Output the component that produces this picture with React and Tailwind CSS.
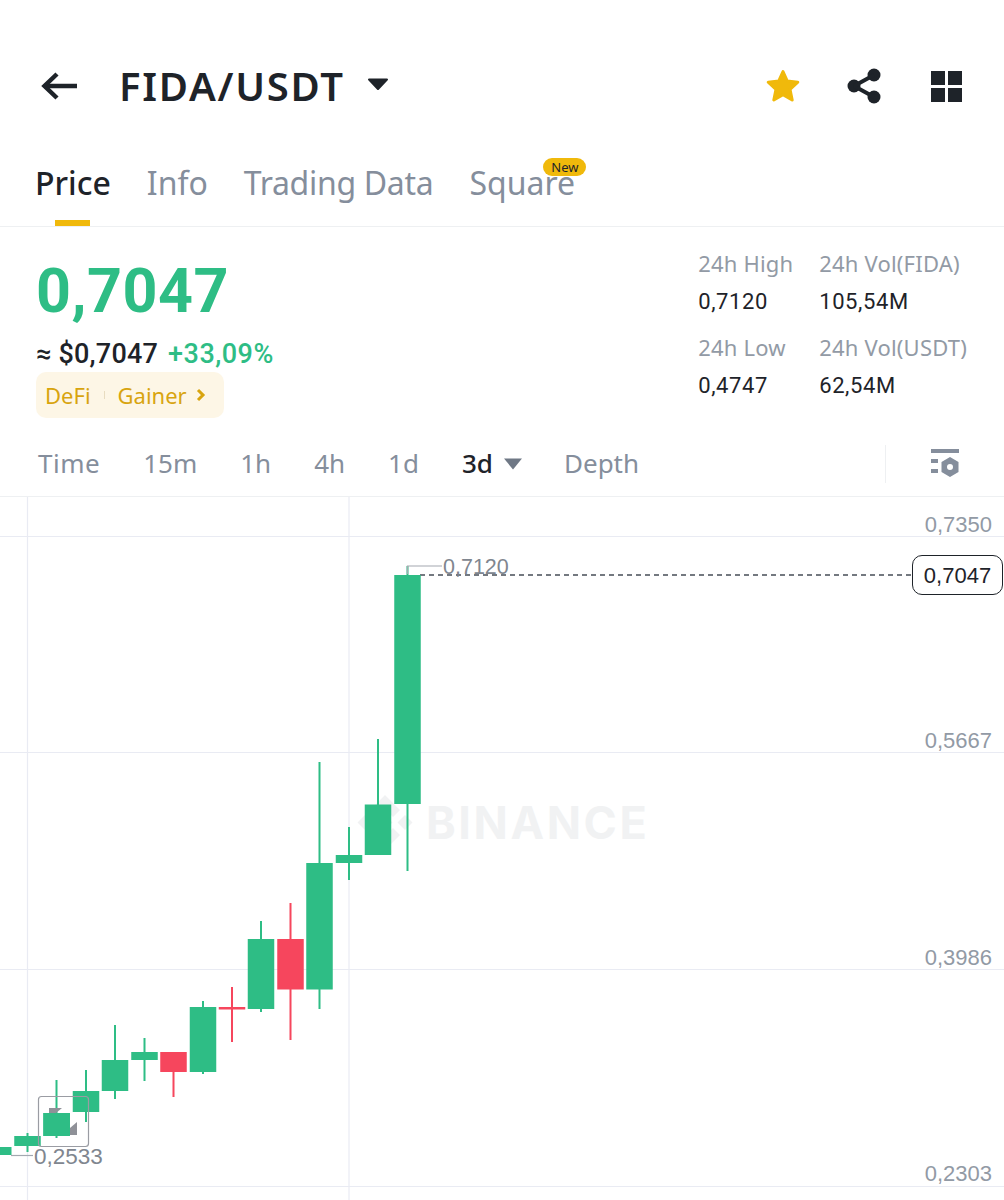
const candles = [
  { x: 5, top: 1147, bottom: 1155, low: 1155, high: 1147, w: 13 },
  { x: 27.5, top: 1136, bottom: 1146, high: 1133, low: 1152 },
  { x: 56.5, top: 1113, bottom: 1136, high: 1080, low: 1138 },
  { x: 86, top: 1091, bottom: 1112, high: 1070, low: 1122 },
  { x: 115, top: 1060, bottom: 1091, high: 1025, low: 1099 },
  { x: 144.5, top: 1052, bottom: 1060, high: 1038, low: 1081 },
  { x: 173.5, top: 1052, bottom: 1072, high: 1052, low: 1097, red: true },
  { x: 203, top: 1007, bottom: 1072, high: 1001, low: 1074 },
  { x: 232, top: 1007, bottom: 1009.5, high: 987, low: 1042, red: true },
  { x: 261, top: 939, bottom: 1009, high: 921, low: 1012 },
  { x: 290.5, top: 939, bottom: 989.5, high: 903, low: 1040, red: true },
  { x: 319.5, top: 863, bottom: 989.5, high: 762, low: 1009 },
  { x: 349, top: 855, bottom: 863, high: 827, low: 880 },
  { x: 378, top: 804.5, bottom: 855, high: 739, low: 855 },
  { x: 407.5, top: 575, bottom: 804, high: 566, low: 871 },
];

const axisLabels = [
  { text: "0,7350", y: 4 },
  { text: "0,5667", y: 220 },
  { text: "0,3986", y: 437 },
  { text: "0,2303", y: 653 },
];

const stats = [
  { label: "24h High", value: "0,7120" },
  { label: "24h Vol(FIDA)", value: "105,54M" },
  { label: "24h Low", value: "0,4747" },
  { label: "24h Vol(USDT)", value: "62,54M" },
];

const times = ["15m", "1h", "4h", "1d"];

function Chart() {
  return (
    <div className="relative h-[703px] w-full overflow-hidden">
      <svg className="absolute inset-0 h-full w-full" viewBox="0 497 1004 703">
        {/* grid */}
        {[536, 752, 969, 1186].map((y) => (
          <line key={y} x1="0" x2="1004" y1={y + 0.5} y2={y + 0.5} stroke="#e9ebf3" strokeWidth="1.2" />
        ))}
        {[27.5, 349].map((x) => (
          <line key={x} x1={x} x2={x} y1="497" y2="1200" stroke="#e9ebf3" strokeWidth="1.2" />
        ))}

        {/* watermark logo */}
        <g fill="#f1f2f3">
          <path d="M385 795 L400 810 L393 817 L385 809 L377 817 L370 810 Z" />
          <path d="M385 850 L400 835 L393 828 L385 836 L377 828 L370 835 Z" />
          <path d="M385 815 L392.500 822.500 L385 830 L377.500 822.500 Z" />
          <path d="M365 815 L372.500 822.500 L365 830 L357.500 822.500 Z" />
          <path d="M405 815 L412.500 822.500 L405 830 L397.500 822.500 Z" />
        </g>

        {/* last price line */}
        <line x1="420" x2="912" y1="575" y2="575" stroke="#474d57" strokeWidth="1.4" strokeDasharray="5 4" />

        {/* candles */}
        {candles.map((c) => {
          const color = c.red ? "#f6465d" : "#2ebd85";
          const w = c.w || 26.5;
          return (
            <g key={c.x} fill={color}>
              <rect x={c.x - 1} y={c.high} width="2" height={c.low - c.high} />
              <rect x={c.x - w / 2} y={c.top} width={w} height={c.bottom - c.top} />
            </g>
          );
        })}

        {/* high/low leader lines */}
        <path d="M407.5 574V566H442" fill="none" stroke="#a3a8b0" strokeWidth="1.2" />
        <path d="M11 1155.5H33" fill="none" stroke="#a3a8b0" strokeWidth="1.2" />

        {/* marker */}
        <rect x="38.5" y="1096.5" width="50" height="50" rx="3" fill="none" stroke="#9a9ca3" strokeWidth="1.2" />
        <path d="M49 1108H62L56 1113H49Z" fill="#8f9198" />
        <path d="M77 1122V1135H70V1128Z" fill="#8f9198" />
        <rect x="43.5" y="1113" width="26.5" height="23" fill="#2ebd85" />
      </svg>

      <span className="absolute left-[426px] top-[304px] text-[45px] leading-[44px] font-bold tracking-[2.600px] text-[#f1f2f3] font-['Inter',sans-serif]">
        BINANCE
      </span>

      {axisLabels.map((l) => (
        <span
          key={l.text}
          className="absolute right-[12px] text-[22px] leading-[48px] text-[#929aa5] font-['Liberation_Sans',sans-serif]"
          style={{ top: l.y }}
        >
          {l.text}
        </span>
      ))}

      <span className="absolute left-[443px] top-[58px] text-[21.500px] leading-6 text-[#80868f] font-['Liberation_Sans',sans-serif]">
        0,7120
      </span>
      <span className="absolute left-[34px] top-[648px] text-[22.500px] leading-6 text-[#80868f] font-['Liberation_Sans',sans-serif]">
        0,2533
      </span>

      <div className="absolute left-[912px] top-[58px] flex h-[40px] w-[91px] items-center justify-center rounded-[10px] border border-[#1e2329] bg-white text-[22px] text-[#1e2329] font-['Liberation_Sans',sans-serif]">
        0,7047
      </div>
    </div>
  );
}

export default function App() {
  return (
    <div className="h-[1200px] w-[1004px] overflow-hidden bg-white font-['Noto_Sans',sans-serif]">
      {/* header */}
      <div className="flex h-[175px] items-start pl-[41px] pr-[42px] pt-[62px]">
        <div className="flex h-[48px] flex-1 items-center">
          <svg width="36" height="30" viewBox="0 0 36 30" fill="none" stroke="#1e2329" strokeWidth="4.500">
            <path d="M36 15H3" />
            <path d="M16 3 3.500 15 16 27" />
          </svg>
          <span className="ml-[42px] text-[40px] font-semibold tracking-[1.7px] text-[#1e2329]">FIDA/USDT</span>
          <svg className="ml-[23px] mb-[4px]" width="20" height="14" viewBox="0 0 20 14" fill="#1e2329">
            <path d="M1 1.500h18a1 1 0 0 1 .7 1.700L11 12.600a1.400 1.400 0 0 1-2 0L.3 3.200A1 1 0 0 1 1 1.500Z" />
          </svg>
        </div>
        <div className="flex h-[48px] items-center">
          <svg width="36" height="36" viewBox="0 0 36 36" fill="#f0b90b" stroke="#f0b90b" strokeWidth="3" strokeLinejoin="round">
            <path d="M18 3.500 22.300 13 32.800 14.200 25 21.300 27.200 32 18 26.600 8.800 32 11 21.300 3.200 14.200 13.700 13Z" />
          </svg>
          <svg className="ml-[46px]" width="34" height="36" viewBox="0 0 34 36" fill="#1e2329">
            <circle cx="7" cy="18" r="6.500" />
            <circle cx="27" cy="7" r="6.500" />
            <circle cx="27" cy="29" r="6.500" />
            <path d="M7 18 27 7M7 18l20 11" stroke="#1e2329" strokeWidth="4" />
          </svg>
          <div className="ml-[50px] grid grid-cols-2 gap-[3px]">
            <div className="h-[14px] w-[14px] bg-[#1e2329]" />
            <div className="h-[14px] w-[14px] bg-[#1e2329]" />
            <div className="h-[14px] w-[14px] bg-[#1e2329]" />
            <div className="h-[14px] w-[14px] bg-[#1e2329]" />
          </div>
        </div>
      </div>

      {/* tabs */}
      <div className="flex h-[52px] items-start gap-[36px] border-b border-[#eef0f2] pl-[35px] text-[32px] leading-[15px] text-[#858e9c]">
        <div className="relative h-full">
          <span className="font-medium text-[#1e2329]">Price</span>
          <div className="absolute bottom-0 left-[20px] h-[6px] w-[35px] bg-[#f0b90b]" />
        </div>
        <span>Info</span>
        <span className="tracking-[-0.300px]">Trading Data</span>
        <div className="relative">
          <span>Square</span>
          <span className="absolute left-[74px] top-[-17px] flex h-[18px] w-[43px] items-center justify-center rounded-full bg-[#f0b90b] text-[13px] text-[#1e2329]">
            New
          </span>
        </div>
      </div>

      {/* price block */}
      <div className="flex h-[208px] justify-between pl-[36px] pr-[37px]">
        <div>
          <div className="mt-[28px] text-[61px] leading-[72px] font-bold tracking-[0.500px] text-[#2ebd85] font-['Roboto',sans-serif]">
            0,7047
          </div>
          <div className="mt-[12px] flex items-center text-[27px] leading-[30px] font-medium font-['Roboto',sans-serif]">
            <span className="tracking-[0.200px] text-[#1e2329]">≈ $0,7047</span>
            <span className="ml-[10px] tracking-[0.500px] text-[#2ebd85]">+33,09%</span>
          </div>
          <div className="mt-[3px] flex h-[46px] w-[188px] items-center rounded-[10px] bg-[#fdf6e6] pl-[9px] text-[22px] text-[#d8a40f]">
            <span>DeFi</span>
            <div className="mx-[13px] h-[8px] w-px bg-[#e8dcc0]" />
            <span>Gainer</span>
            <svg className="ml-[9px]" width="10" height="14" viewBox="0 0 10 14" fill="none" stroke="#d8a40f" strokeWidth="3">
              <path d="m2 2 5 5-5 5" />
            </svg>
          </div>
        </div>
        <div className="mt-[18px] grid h-fit grid-cols-[121px_auto] gap-y-[9px] text-[22px] leading-[36px]">
          {stats.map((s) => (
            <div key={s.label}>
              <div className="tracking-[0.200px] text-[#929aa5]">{s.label}</div>
              <div className="mt-[3px] tracking-[0.600px] text-[#1e2329] font-['Roboto',sans-serif]">{s.value}</div>
            </div>
          ))}
        </div>
      </div>

      {/* time intervals */}
      <div className="flex h-[62px] items-center border-b border-[#eef0f2] pb-[4px] pl-[38px] pr-[44px] text-[26px] text-[#858e9c]">
        <div className="flex flex-1 items-center gap-[43px]">
          <span className="tracking-[0.500px]">Time</span>
          {times.map((t) => (
            <span key={t}>{t}</span>
          ))}
          <span className="flex items-center gap-[10px] font-medium text-[#1e2329]">
            3d
            <svg width="20" height="12" viewBox="0 0 20 12" fill="#6f7885">
              <path d="M1 .5h18L10 11.500Z" />
            </svg>
          </span>
          <span className="ml-[-2px]">Depth</span>
        </div>
        <div className="mr-[44px] h-[38px] w-px bg-[#eef0f2]" />
        <svg width="30" height="32" viewBox="0 0 30 32" fill="#858e9c">
          <rect x="1" y="1" width="28" height="4" />
          <rect x="1" y="11" width="7" height="4" />
          <rect x="1" y="21" width="7" height="4" />
          <path fillRule="evenodd" d="M20 9l8.500 5v10L20 29l-8.500-5V14Zm0 7a3 3 0 1 0 0 6 3 3 0 0 0 0-6Z" />
        </svg>
      </div>

      <Chart />
    </div>
  );
}
